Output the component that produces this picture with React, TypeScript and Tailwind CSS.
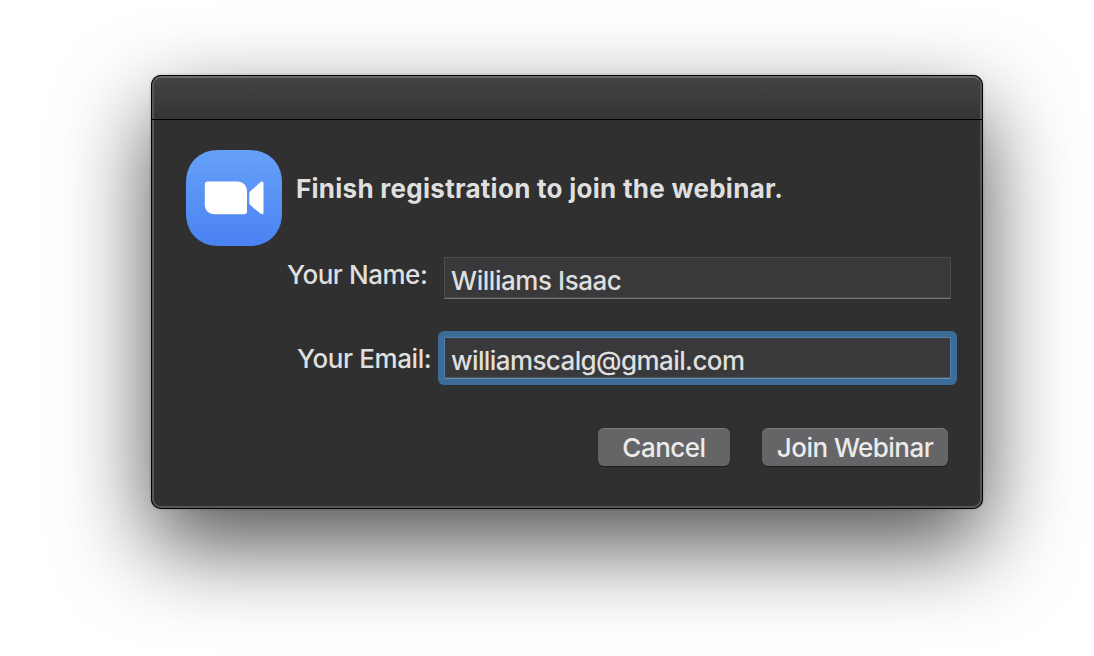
import React from 'react';

function ZoomLogo() {
  return (
    <svg className="block h-24 w-24 shrink-0" viewBox="0 0 96 96" aria-hidden="true">
      <defs>
        <linearGradient id="logo-blue" x1="0" y1="0" x2="0" y2="1">
          <stop offset="0" stopColor="#66a1f8" />
          <stop offset="1" stopColor="#4a82f2" />
        </linearGradient>
      </defs>
      <path
        d="M33 0H63C83 0 96 13 96 33V63C96 83 83 96 63 96H33C13 96 0 83 0 63V33C0 13 13 0 33 0Z"
        fill="url(#logo-blue)"
      />
      <path
        d="M21.5 31.5H51C57 31.5 61 35.5 61 41.5V61.5C61 63.2 60 64.3 58.2 64.3H29C23 64.3 18.8 60.5 18.8 54.5V34.3C18.8 32.6 19.8 31.5 21.5 31.5Z"
        fill="#fff"
      />
      <path
        d="M64.8 40.8L74.3 32.3C76 30.9 77.5 31.5 77.5 33.6V62.2C77.5 64.5 76 64.9 74.3 63.6L64.8 55.6C63.8 54.7 63.3 53.8 63.3 52.4V44C63.3 42.6 63.8 41.7 64.8 40.8Z"
        fill="#fff"
      />
    </svg>
  );
}

export default function App() {
  return (
    <main className="h-[656px] w-[1094px] overflow-hidden bg-white pt-[75px] pl-[151px] font-['Inter','Liberation_Sans',sans-serif] text-[26px] leading-8 font-[450] whitespace-nowrap text-[#dfdfdf]">
      <section className="h-[434px] w-[832px] rounded-[10px] bg-[#303030] p-px shadow-[0_0_3px_rgba(0,0,0,0.2),0_36px_90px_rgba(0,0,0,0.69)] ring-1 ring-black ring-inset">
        <div className="h-full rounded-[9px] border-2 border-[#565656] border-t-[#6a6a6b]">
          <header className="h-[41px] rounded-t-[7px] bg-linear-to-b from-[#434344] to-[#353537]" />
          <div className="-mx-0.5 h-px bg-black" />
          <div className="flex pt-[30px] pl-8">
            <ZoomLogo />
            <h1 className="mt-[23px] ml-[14px] font-bold tracking-[0.27px]">Finish registration to join the webinar.</h1>
          </div>
          <form onSubmit={(e) => e.preventDefault()}>
            <div className="mt-[11px] flex pl-[133px]">
              <label htmlFor="name" className="mt-[2px] w-[157px] tracking-[-0.45px]">Your Name:</label>
              <input
                id="name"
                defaultValue="Williams Isaac"
                className="h-[42px] w-[507px] border border-[#4b4b4c] border-b-[#757577] bg-[#39393b] px-[6px] pt-[4px] tracking-[-0.45px] shadow-[inset_0_-1px_0_#4b4b4c] outline-none"
              />
            </div>
            <div className="mt-[32px] flex pl-[143px]">
              <label htmlFor="email" className="mt-[12px] w-[141px] tracking-[-0.4px]">Your Email:</label>
              <div className="h-[54px] w-[519px] rounded-[6px] bg-[#3e6c98] p-[6px]">
                <input
                  id="email"
                  defaultValue="williamscalg@gmail.com"
                  className="block h-[42px] w-[507px] border border-[#4d7fae] border-b-[#668db2] bg-[#39393b] px-[6px] pt-[4px] tracking-[-0.6px] shadow-[inset_0_-1px_0_#4b5a69] outline-none"
                />
              </div>
            </div>
            <div className="mt-[43px] flex gap-8 pl-[444px] text-[#ebebeb]">
              <button className="h-[38px] w-[132px] rounded-[6px] border-t border-[#7b7b7d] bg-[#656567] tracking-[-0.5px] shadow-[0_1px_1px_rgba(0,0,0,0.4)]">Cancel</button>
              <button className="h-[38px] w-[186px] rounded-[6px] border-t border-[#7b7b7d] bg-[#656567] tracking-[-0.55px] shadow-[0_1px_1px_rgba(0,0,0,0.4)]">Join Webinar</button>
            </div>
          </form>
        </div>
      </section>
    </main>
  );
}
